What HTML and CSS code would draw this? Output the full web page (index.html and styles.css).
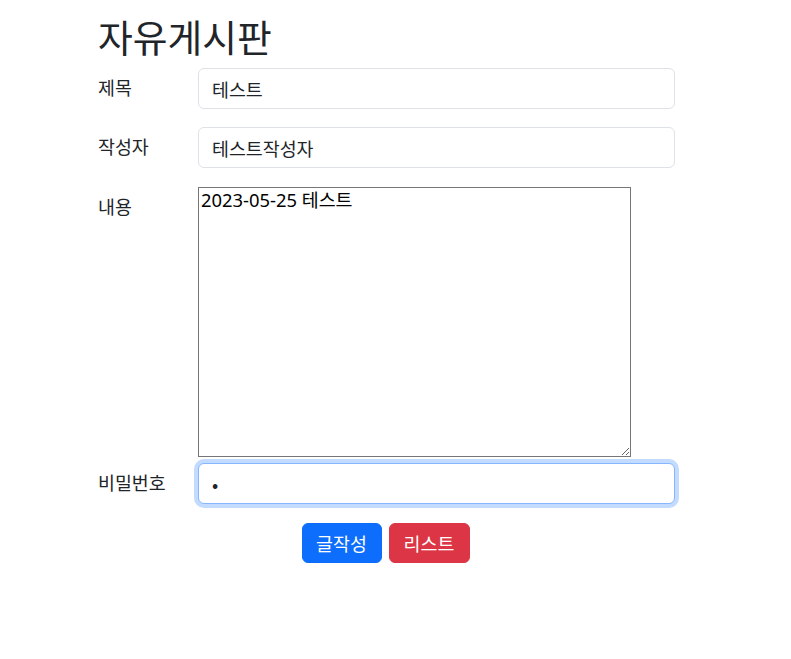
FILE: index.html
```html
<!DOCTYPE html>
<html lang="ko">
<head>
<meta charset="utf-8">
<title>자유게시판</title>
<link rel="stylesheet" href="styles.css">
</head>
<body>
<div class="board">
  <h1 class="title">자유게시판</h1>
  <form class="write-form">
    <div class="form-row">
      <label class="form-label" for="subject">제목</label>
      <input class="form-control" id="subject" type="text" value="테스트">
    </div>
    <div class="form-row form-row-wide">
      <label class="form-label" for="writer">작성자</label>
      <input class="form-control" id="writer" type="text" value="테스트작성자">
    </div>
    <div class="form-row form-row-tight">
      <label class="form-label" for="content">내용</label>
      <textarea class="content-area" id="content">2023-05-25 테스트</textarea>
    </div>
    <div class="form-row form-row-wide">
      <label class="form-label" for="pw">비밀번호</label>
      <input class="form-control is-focused" id="pw" type="password" value="1" autofocus>
    </div>
    <div class="actions">
      <button type="button" class="btn btn-primary">글작성</button>
      <button type="button" class="btn btn-danger">리스트</button>
    </div>
  </form>
</div>
</body>
</html>
```
FILE: styles.css
```css
html, body {
  margin: 0;
  padding: 0;
  background: #fff;
}
body {
  font-family: "Noto Sans CJK KR", "Noto Sans", sans-serif;
  color: #212529;
  font-size: 18px;
  line-height: 1.5;
}
.board {
  width: 577px;
  padding: 15px 0 0 98px;
}
.title {
  margin: 0 0 12px;
  font-size: 37.8px;
  font-weight: 400;
  line-height: 41px;
}
.write-form {
  display: flex;
  flex-direction: column;
}
.form-row {
  display: flex;
  align-items: flex-start;
  margin-bottom: 18px;
}
.form-row-wide {
  margin-bottom: 19px;
}
.form-row-tight {
  margin-bottom: 6px;
}
.form-label {
  width: 100px;
  flex: none;
  padding-top: 7px;
  font-size: 18.4px;
  line-height: 24px;
}
.form-control {
  box-sizing: border-box;
  width: 477px;
  height: 41px;
  padding: 6px 13px;
  font-family: inherit;
  font-size: 18.4px;
  color: #212529;
  background: #fff;
  border: 1px solid #dee2e6;
  border-radius: 6px;
  outline: none;
}
.is-focused {
  border-color: #86b7fe;
  box-shadow: 0 0 0 4px rgba(13, 110, 253, .25);
}
.content-area {
  box-sizing: border-box;
  width: 433px;
  height: 270px;
  margin: 0;
  padding: 2px;
  font-family: "Noto Sans", "Noto Sans CJK KR", sans-serif;
  font-size: 18.4px;
  line-height: 1.1;
  color: #000;
  border: 1px solid #767676;
  border-radius: 0;
}
.actions {
  display: flex;
  justify-content: center;
  gap: 7px;
  padding-right: 2px;
}
.btn {
  box-sizing: border-box;
  height: 40px;
  padding: 6px 10px;
  font-family: inherit;
  font-size: 18.4px;
  line-height: 24px;
  color: #fff;
  border: 1px solid transparent;
  border-radius: 6px;
}
.btn-primary {
  width: 80px;
  background: #0d6efd;
  border-color: #0d6efd;
}
.btn-danger {
  width: 81px;
  background: #dc3545;
  border-color: #dc3545;
}
```
